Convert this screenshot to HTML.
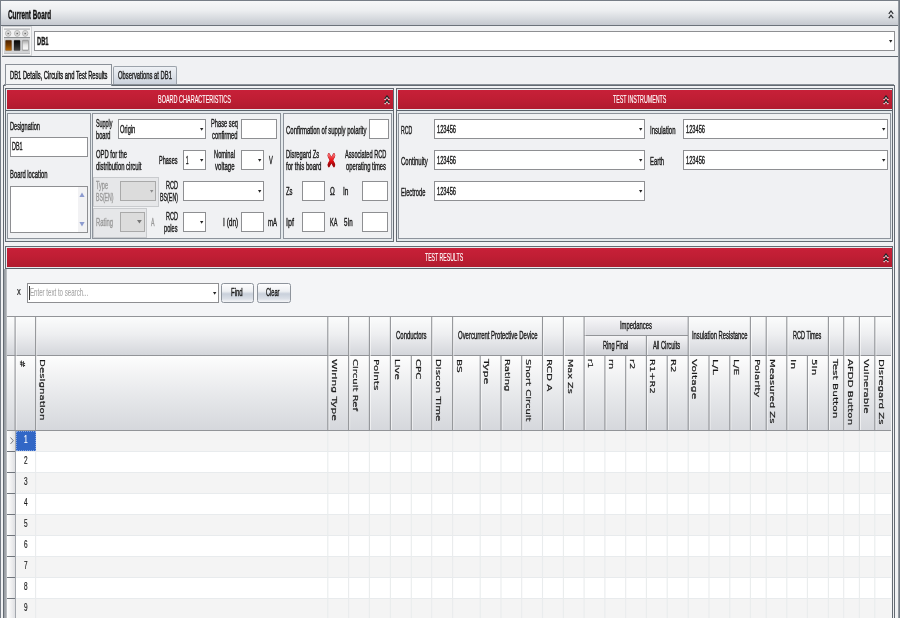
<!DOCTYPE html>
<html lang="en"><head><meta charset="utf-8"><title>Current Board</title>
<style>
html,body{margin:0;padding:0;}
body{width:900px;height:618px;overflow:hidden;position:relative;background:#f0f1f3;font-family:"Liberation Sans",sans-serif;}
div,span.t,svg.a{position:absolute;box-sizing:content-box;}
span.t{white-space:nowrap;line-height:1;transform-origin:0 0;-webkit-text-stroke:0.42px currentColor;}
svg.a{overflow:visible;}
span.v{font-family:"DejaVu Sans","Liberation Sans",sans-serif;-webkit-text-stroke:0.25px currentColor;}
</style></head><body>
<svg width="0" height="0" style="position:absolute"><filter id="hb" x="0" y="0" width="1" height="1" color-interpolation-filters="sRGB"><feGaussianBlur stdDeviation="0.42 0"/></filter></svg>
<div id="root" style="left:0;top:0;width:900px;height:618px;overflow:hidden;filter:url(#hb);">

<div style="left:0px;top:0px;width:898px;height:640px;border:1px solid #767d86;background:#f0f1f3;"></div>
<div style="left:898px;top:1px;width:1px;height:640px;background:#959ba2;"></div>
<div style="left:1px;top:1px;width:897px;height:24px;background:linear-gradient(#f6f7f8,#eceef0 40%,#c5c9d0);border-bottom:1px solid #6b727a;"></div>
<span class="t" style="left:8.00px;top:8.84px;font-size:12px;font-weight:bold;color:#111;transform:scaleX(0.5287);-webkit-text-stroke-width:0.4px;">Current Board</span>
<svg class="a" style="left:888px;top:9.7px" width="6" height="9" viewBox="0 0 6 9"><path d="M0.8 3.9L3 0.9L5.2 3.9M0.8 8.1L3 5.1L5.2 8.1" fill="none" stroke="#2a2d31" stroke-width="1.15"/></svg>
<div style="left:2px;top:26px;width:30px;height:30px;background:#cfd1d4;"></div>
<div style="left:3px;top:27px;width:26px;height:26px;border:1px solid #f6f6f6;background:#d2d3d5;"></div>
<div style="left:4px;top:29px;width:26px;height:8px;background:#f1f1f2;border-top:1px solid #c4c6c8;"></div>
<div style="left:4px;top:37px;width:26px;height:1px;background:#8f9295;"></div>
<div style="left:4px;top:53px;width:26px;height:1px;background:#bdbfc2;"></div>
<svg class="a" style="left:5.1000000000000005px;top:29.6px" width="6.4" height="6.8" viewBox="0 0 6.4 6.8"><ellipse cx="3.2" cy="3.4" rx="2.7" ry="2.9" fill="#ececec" stroke="#a4a4a4" stroke-width="0.8"/><ellipse cx="3.2" cy="3.4" rx="1.5" ry="1.6" fill="#e0e0e0" stroke="#b9b9b9" stroke-width="0.5"/><circle cx="3.2" cy="3.4" r="0.75" fill="#555"/></svg>
<svg class="a" style="left:13.7px;top:29.6px" width="6.4" height="6.8" viewBox="0 0 6.4 6.8"><ellipse cx="3.2" cy="3.4" rx="2.7" ry="2.9" fill="#ececec" stroke="#a4a4a4" stroke-width="0.8"/><ellipse cx="3.2" cy="3.4" rx="1.5" ry="1.6" fill="#e0e0e0" stroke="#b9b9b9" stroke-width="0.5"/><circle cx="3.2" cy="3.4" r="0.75" fill="#555"/></svg>
<svg class="a" style="left:22.1px;top:29.6px" width="6.4" height="6.8" viewBox="0 0 6.4 6.8"><ellipse cx="3.2" cy="3.4" rx="2.7" ry="2.9" fill="#ececec" stroke="#a4a4a4" stroke-width="0.8"/><ellipse cx="3.2" cy="3.4" rx="1.5" ry="1.6" fill="#e0e0e0" stroke="#b9b9b9" stroke-width="0.5"/><circle cx="3.2" cy="3.4" r="0.75" fill="#555"/></svg>
<svg class="a" style="left:4px;top:38px" width="26" height="15" viewBox="0 0 26 15"><defs><linearGradient id="ga" x1="0" y1="0" x2="0" y2="1"><stop offset="0" stop-color="#4a2100"/><stop offset=".5" stop-color="#7b3e00"/><stop offset="1" stop-color="#bd6a04"/></linearGradient><linearGradient id="gb" x1="0" y1="0" x2="0" y2="1"><stop offset="0" stop-color="#050505"/><stop offset=".6" stop-color="#262626"/><stop offset="1" stop-color="#4a4a4a"/></linearGradient><linearGradient id="gc" x1="0" y1="0" x2="0" y2="1"><stop offset="0" stop-color="#a4a4a4"/><stop offset=".45" stop-color="#e6e6e6"/><stop offset=".8" stop-color="#f6f6f6"/><stop offset="1" stop-color="#bcbcbc"/></linearGradient></defs><rect x="1.5" y="2.3" width="6.1" height="10.2" rx=".6" fill="url(#ga)" stroke="#5c3a14" stroke-opacity=".6" stroke-width=".5"/><rect x="10" y="2.3" width="6.1" height="10.2" rx=".6" fill="url(#gb)" stroke="#222" stroke-opacity=".6" stroke-width=".5"/><rect x="18.4" y="2.3" width="6.1" height="10.2" rx=".6" fill="url(#gc)" stroke="#8a8a8a" stroke-width=".6"/></svg>
<div style="left:34px;top:31px;width:859px;height:18px;background:#fff;border:1px solid #8e8f92;"></div>
<svg class="a" style="left:888.80px;top:39.90px" width="3.4" height="2.8" viewBox="0 0 3.4 2.8"><path d="M0 0H3.4L1.7 2.8Z" fill="#222"/></svg>
<span class="t" style="left:37.00px;top:35.87px;font-size:11.5px;font-weight:bold;color:#1a1a1a;transform:scaleX(0.4999);">DB1</span>
<div style="left:2px;top:56px;width:896px;height:1px;background:#5f666e;"></div>
<div style="left:113px;top:66px;width:62px;height:18px;border:1px solid #9ca3ab;border-bottom:none;border-radius:2px 2px 0 0;background:linear-gradient(#eef1f5,#dde2e9 50%,#c9d0db);"></div>
<span class="t" style="left:117.50px;top:70.17px;font-size:11.5px;color:#222;transform:scaleX(0.5090);">Observations at DB1</span>
<div style="left:3px;top:85px;width:890px;height:600px;border:1px solid #636a72;background:#f0f1f3;"></div>
<div style="left:5px;top:64px;width:105px;height:21px;border:1px solid #8a9098;border-bottom:none;background:#f3f4f5;"></div>
<div style="left:4px;top:84px;width:890px;height:1px;background:#8b9198;"></div>
<span class="t" style="left:9.50px;top:69.87px;font-size:11.5px;color:#111;transform:scaleX(0.5040);">DB1 Details, Circuits and Test Results</span>
<div style="left:5px;top:88px;width:387px;height:152px;border:1px solid #636a72;background:#e4e9ec;"></div>
<div style="left:7px;top:90px;width:386px;height:19px;background:linear-gradient(#c72038,#c01e34 45%,#b01b2f);"></div>
<div style="left:6px;top:110px;width:387px;height:1px;background:#59616a;"></div>
<span class="t" style="left:158.00px;top:94.37px;font-size:11.5px;color:#fff;transform:scaleX(0.4780);-webkit-text-stroke-width:0.15px;">BOARD CHARACTERISTICS</span>
<svg class="a" style="left:383.8px;top:95.2px" width="6" height="9" viewBox="0 0 6 9"><path d="M0.7 4.9L3 1.9L5.3 4.9M0.7 9.1L3 6.1L5.3 9.1" fill="none" stroke="#fff" stroke-width="1.2"/><path d="M0.7 3.9L3 0.9L5.3 3.9M0.7 8.1L3 5.1L5.3 8.1" fill="none" stroke="#1c2224" stroke-width="1.2"/></svg>
<div style="left:7px;top:113px;width:82px;height:124px;border:1px solid #8d939b;background:#f0f1f3;"></div>
<div style="left:92px;top:113px;width:187px;height:124px;border:1px solid #8d939b;background:#f0f1f3;"></div>
<div style="left:283px;top:113px;width:107px;height:124px;border:1px solid #8d939b;background:#f0f1f3;"></div>
<div style="left:396px;top:88px;width:495px;height:152px;border:1px solid #636a72;background:#e4e9ec;"></div>
<div style="left:398px;top:90px;width:494px;height:19px;background:linear-gradient(#c72038,#c01e34 45%,#b01b2f);"></div>
<div style="left:397px;top:110px;width:495px;height:1px;background:#59616a;"></div>
<span class="t" style="left:612.70px;top:94.37px;font-size:11.5px;color:#fff;transform:scaleX(0.4617);-webkit-text-stroke-width:0.15px;">TEST INSTRUMENTS</span>
<svg class="a" style="left:882.5px;top:95.2px" width="6" height="9" viewBox="0 0 6 9"><path d="M0.7 4.9L3 1.9L5.3 4.9M0.7 9.1L3 6.1L5.3 9.1" fill="none" stroke="#fff" stroke-width="1.2"/><path d="M0.7 3.9L3 0.9L5.3 3.9M0.7 8.1L3 5.1L5.3 8.1" fill="none" stroke="#1c2224" stroke-width="1.2"/></svg>
<div style="left:398px;top:113px;width:491px;height:124px;border:1px solid #8d939b;background:#f0f1f3;"></div>
<div style="left:5px;top:246px;width:886px;height:452px;border:1px solid #636a72;background:#e4e9ec;"></div>
<div style="left:7px;top:248px;width:885px;height:19px;background:linear-gradient(#c72038,#c01e34 45%,#b01b2f);"></div>
<div style="left:6px;top:268px;width:886px;height:1px;background:#59616a;"></div>
<span class="t" style="left:424.90px;top:252.37px;font-size:11.5px;color:#fff;transform:scaleX(0.4505);-webkit-text-stroke-width:0.15px;">TEST RESULTS</span>
<svg class="a" style="left:882.5px;top:253.2px" width="6" height="9" viewBox="0 0 6 9"><path d="M0.7 4.9L3 1.9L5.3 4.9M0.7 9.1L3 6.1L5.3 9.1" fill="none" stroke="#fff" stroke-width="1.2"/><path d="M0.7 3.9L3 0.9L5.3 3.9M0.7 8.1L3 5.1L5.3 8.1" fill="none" stroke="#1c2224" stroke-width="1.2"/></svg>
<div style="left:7px;top:269px;width:885px;height:400px;background:#f4f5f7;"></div>
<span class="t" style="left:10.00px;top:120.77px;font-size:11.5px;color:#1a1a1a;transform:scaleX(0.4940);">Designation</span>
<div style="left:10px;top:137px;width:76px;height:18px;background:#fff;border:1px solid #8e8f92;"></div>
<span class="t" style="left:11.70px;top:141.27px;font-size:11.5px;color:#1a1a1a;transform:scaleX(0.4738);">DB1</span>
<span class="t" style="left:10.00px;top:168.77px;font-size:11.5px;color:#1a1a1a;transform:scaleX(0.5101);">Board location</span>
<div style="left:10px;top:186px;width:76px;height:45px;background:#fff;border:1px solid #8e8f92;"></div>
<div style="left:78px;top:187px;width:9px;height:45px;background:#f2f2f4;"></div>
<svg class="a" style="left:79px;top:192px" width="6" height="6" viewBox="0 0 6 6"><path d="M3 0.5L5.6 5H0.4Z" fill="#8d9bd0"/></svg>
<svg class="a" style="left:79px;top:221px" width="6" height="6" viewBox="0 0 6 6"><path d="M3 5.5L5.6 1H0.4Z" fill="#8d9bd0"/></svg>
<span class="t" style="left:96.00px;top:117.77px;font-size:11.5px;color:#1a1a1a;transform:scaleX(0.4693);">Supply</span>
<span class="t" style="left:96.00px;top:130.27px;font-size:11.5px;color:#1a1a1a;transform:scaleX(0.4930);">board</span>
<div style="left:118px;top:119px;width:86px;height:18px;background:#fff;border:1px solid #8e8f92;"></div>
<svg class="a" style="left:199.60px;top:127.90px" width="3.4" height="2.8" viewBox="0 0 3.4 2.8"><path d="M0 0H3.4L1.7 2.8Z" fill="#222"/></svg>
<span class="t" style="left:119.70px;top:123.57px;font-size:11.5px;color:#1a1a1a;transform:scaleX(0.4988);">Origin</span>
<span class="t" style="left:211.00px;top:118.27px;font-size:11.5px;color:#1a1a1a;transform:scaleX(0.4969);">Phase seq</span>
<span class="t" style="left:212.00px;top:130.27px;font-size:11.5px;color:#1a1a1a;transform:scaleX(0.5070);">confirmed</span>
<div style="left:241px;top:119px;width:34px;height:18px;background:#fff;border:1px solid #8e8f92;"></div>
<span class="t" style="left:96.00px;top:148.77px;font-size:11.5px;color:#1a1a1a;transform:scaleX(0.5106);">OPD for the</span>
<span class="t" style="left:96.00px;top:161.27px;font-size:11.5px;color:#1a1a1a;transform:scaleX(0.5122);">distribution circuit</span>
<span class="t" style="left:159.00px;top:154.87px;font-size:11.5px;color:#1a1a1a;transform:scaleX(0.4823);">Phases</span>
<div style="left:183px;top:150px;width:21px;height:18px;background:#fff;border:1px solid #8e8f92;"></div>
<svg class="a" style="left:199.60px;top:158.90px" width="3.4" height="2.8" viewBox="0 0 3.4 2.8"><path d="M0 0H3.4L1.7 2.8Z" fill="#222"/></svg>
<span class="t" style="left:186.00px;top:154.57px;font-size:11.5px;color:#1a1a1a;transform:scaleX(0.3909);">1</span>
<span class="t" style="left:213.50px;top:148.77px;font-size:11.5px;color:#1a1a1a;transform:scaleX(0.4979);">Nominal</span>
<span class="t" style="left:214.50px;top:161.27px;font-size:11.5px;color:#1a1a1a;transform:scaleX(0.5259);">voltage</span>
<div style="left:241px;top:150px;width:21px;height:18px;background:#fff;border:1px solid #8e8f92;"></div>
<svg class="a" style="left:257.60px;top:158.90px" width="3.4" height="2.8" viewBox="0 0 3.4 2.8"><path d="M0 0H3.4L1.7 2.8Z" fill="#222"/></svg>
<span class="t" style="left:268.70px;top:154.77px;font-size:11.5px;color:#1a1a1a;transform:scaleX(0.4954);">V</span>
<div style="left:93px;top:177px;width:64px;height:28px;border:1px solid #c9cbce;background:#e6e7e9;"></div>
<span class="t" style="left:96.00px;top:179.77px;font-size:11.5px;color:#9a9a9a;transform:scaleX(0.4814);">Type</span>
<span class="t" style="left:96.00px;top:192.27px;font-size:11.5px;color:#9a9a9a;transform:scaleX(0.4490);">BS(EN)</span>
<div style="left:120px;top:181px;width:34px;height:18px;background:#dcdcdc;border:1px solid #a9a9a9;"></div>
<svg class="a" style="left:149.60px;top:189.90px" width="3.4" height="2.8" viewBox="0 0 3.4 2.8"><path d="M0 0H3.4L1.7 2.8Z" fill="#8a8a8a"/></svg>
<span class="t" style="left:165.50px;top:179.77px;font-size:11.5px;color:#1a1a1a;transform:scaleX(0.4816);">RCD</span>
<span class="t" style="left:159.50px;top:192.27px;font-size:11.5px;color:#1a1a1a;transform:scaleX(0.4618);">BS(EN)</span>
<div style="left:183px;top:181px;width:79px;height:18px;background:#fff;border:1px solid #8e8f92;"></div>
<svg class="a" style="left:257.60px;top:189.90px" width="3.4" height="2.8" viewBox="0 0 3.4 2.8"><path d="M0 0H3.4L1.7 2.8Z" fill="#222"/></svg>
<div style="left:93px;top:208px;width:52px;height:28px;border:1px solid #c9cbce;background:#e6e7e9;"></div>
<span class="t" style="left:96.00px;top:216.77px;font-size:11.5px;color:#9a9a9a;transform:scaleX(0.5114);">Rating</span>
<div style="left:120px;top:212px;width:23px;height:18px;background:#dcdcdc;border:1px solid #a9a9a9;"></div>
<svg class="a" style="left:137.20px;top:220.40px" width="4.8" height="3.6" viewBox="0 0 4.8 3.6"><path d="M0 0H4.8L2.4 3.6Z" fill="#777"/></svg>
<span class="t" style="left:150.50px;top:216.77px;font-size:11.5px;color:#9a9a9a;transform:scaleX(0.4563);">A</span>
<span class="t" style="left:165.50px;top:210.77px;font-size:11.5px;color:#1a1a1a;transform:scaleX(0.4816);">RCD</span>
<span class="t" style="left:164.00px;top:223.27px;font-size:11.5px;color:#1a1a1a;transform:scaleX(0.4911);">poles</span>
<div style="left:183px;top:212px;width:21px;height:18px;background:#fff;border:1px solid #8e8f92;"></div>
<svg class="a" style="left:199.60px;top:220.90px" width="3.4" height="2.8" viewBox="0 0 3.4 2.8"><path d="M0 0H3.4L1.7 2.8Z" fill="#222"/></svg>
<span class="t" style="left:222.70px;top:216.77px;font-size:11.5px;color:#1a1a1a;transform:scaleX(0.5701);">I (dn)</span>
<div style="left:241px;top:212px;width:21px;height:18px;background:#fff;border:1px solid #8e8f92;"></div>
<span class="t" style="left:268.00px;top:216.77px;font-size:11.5px;color:#1a1a1a;transform:scaleX(0.5217);">mA</span>
<span class="t" style="left:285.50px;top:124.67px;font-size:11.5px;color:#1a1a1a;transform:scaleX(0.5205);">Confirmation of supply polarity</span>
<div style="left:369px;top:119px;width:18px;height:18px;background:#fff;border:1px solid #8e8f92;"></div>
<span class="t" style="left:285.50px;top:148.77px;font-size:11.5px;color:#1a1a1a;transform:scaleX(0.5044);">Disregard Zs</span>
<span class="t" style="left:285.50px;top:161.27px;font-size:11.5px;color:#1a1a1a;transform:scaleX(0.5290);">for this board</span>
<svg class="a" style="left:326.8px;top:152.5px" width="8.8" height="14.4" viewBox="0 0 17 15" preserveAspectRatio="none"><defs><linearGradient id="gx" x1="0" y1="0" x2="0" y2="1"><stop offset="0" stop-color="#f4686c"/><stop offset=".35" stop-color="#f0262a"/><stop offset=".6" stop-color="#e20d12"/><stop offset="1" stop-color="#9d080c"/></linearGradient></defs><path d="M3.6 2.6L13.4 12.4M13.4 2.6L3.6 12.4" fill="none" stroke="#b3161a" stroke-width="5" stroke-linecap="round"/><path d="M3.6 2.6L13.4 12.4M13.4 2.6L3.6 12.4" fill="none" stroke="url(#gx)" stroke-width="4" stroke-linecap="round"/></svg>
<span class="t" style="left:344.80px;top:148.77px;font-size:11.5px;color:#1a1a1a;transform:scaleX(0.4907);">Associated RCD</span>
<span class="t" style="left:345.50px;top:161.27px;font-size:11.5px;color:#1a1a1a;transform:scaleX(0.5088);">operating times</span>
<span class="t" style="left:285.50px;top:185.87px;font-size:11.5px;color:#1a1a1a;transform:scaleX(0.5088);">Zs</span>
<div style="left:302px;top:181px;width:21px;height:18px;background:#fff;border:1px solid #8e8f92;"></div>
<span class="t" style="left:330.00px;top:185.87px;font-size:11.5px;color:#1a1a1a;transform:scaleX(0.5584);">Ω</span>
<span class="t" style="left:343.20px;top:185.87px;font-size:11.5px;color:#1a1a1a;transform:scaleX(0.5631);">In</span>
<div style="left:362px;top:181px;width:24px;height:18px;background:#fff;border:1px solid #8e8f92;"></div>
<span class="t" style="left:285.50px;top:216.77px;font-size:11.5px;color:#1a1a1a;transform:scaleX(0.6179);">Ipf</span>
<div style="left:302px;top:212px;width:21px;height:18px;background:#fff;border:1px solid #8e8f92;"></div>
<span class="t" style="left:329.60px;top:216.77px;font-size:11.5px;color:#1a1a1a;transform:scaleX(0.4823);">KA</span>
<span class="t" style="left:343.70px;top:216.77px;font-size:11.5px;color:#1a1a1a;transform:scaleX(0.5380);">5In</span>
<div style="left:362px;top:212px;width:24px;height:18px;background:#fff;border:1px solid #8e8f92;"></div>
<span class="t" style="left:400.70px;top:124.67px;font-size:11.5px;color:#1a1a1a;transform:scaleX(0.4535);">RCD</span>
<div style="left:434px;top:119px;width:209px;height:18px;background:#fff;border:1px solid #8e8f92;"></div>
<svg class="a" style="left:639.10px;top:127.90px" width="3.4" height="2.8" viewBox="0 0 3.4 2.8"><path d="M0 0H3.4L1.7 2.8Z" fill="#222"/></svg>
<span class="t" style="left:436.50px;top:123.57px;font-size:11.5px;color:#1a1a1a;transform:scaleX(0.4952);">123456</span>
<span class="t" style="left:400.70px;top:155.67px;font-size:11.5px;color:#1a1a1a;transform:scaleX(0.5221);">Continuity</span>
<div style="left:434px;top:150px;width:209px;height:18px;background:#fff;border:1px solid #8e8f92;"></div>
<svg class="a" style="left:639.10px;top:158.90px" width="3.4" height="2.8" viewBox="0 0 3.4 2.8"><path d="M0 0H3.4L1.7 2.8Z" fill="#222"/></svg>
<span class="t" style="left:436.50px;top:154.57px;font-size:11.5px;color:#1a1a1a;transform:scaleX(0.4952);">123456</span>
<span class="t" style="left:400.70px;top:186.67px;font-size:11.5px;color:#1a1a1a;transform:scaleX(0.5023);">Electrode</span>
<div style="left:434px;top:181px;width:209px;height:18px;background:#fff;border:1px solid #8e8f92;"></div>
<svg class="a" style="left:639.10px;top:189.90px" width="3.4" height="2.8" viewBox="0 0 3.4 2.8"><path d="M0 0H3.4L1.7 2.8Z" fill="#222"/></svg>
<span class="t" style="left:436.50px;top:185.57px;font-size:11.5px;color:#1a1a1a;transform:scaleX(0.4952);">123456</span>
<span class="t" style="left:650.00px;top:124.67px;font-size:11.5px;color:#1a1a1a;transform:scaleX(0.5180);">Insulation</span>
<div style="left:683px;top:119px;width:203px;height:18px;background:#fff;border:1px solid #8e8f92;"></div>
<svg class="a" style="left:882.30px;top:127.90px" width="3.4" height="2.8" viewBox="0 0 3.4 2.8"><path d="M0 0H3.4L1.7 2.8Z" fill="#222"/></svg>
<span class="t" style="left:685.50px;top:123.57px;font-size:11.5px;color:#1a1a1a;transform:scaleX(0.4952);">123456</span>
<span class="t" style="left:650.00px;top:155.67px;font-size:11.5px;color:#1a1a1a;transform:scaleX(0.5130);">Earth</span>
<div style="left:683px;top:150px;width:203px;height:18px;background:#fff;border:1px solid #8e8f92;"></div>
<svg class="a" style="left:882.30px;top:158.90px" width="3.4" height="2.8" viewBox="0 0 3.4 2.8"><path d="M0 0H3.4L1.7 2.8Z" fill="#222"/></svg>
<span class="t" style="left:685.50px;top:154.57px;font-size:11.5px;color:#1a1a1a;transform:scaleX(0.4952);">123456</span>
<span class="t" style="left:17.20px;top:286.47px;font-size:11.5px;color:#222;transform:scaleX(0.6609);-webkit-text-stroke-width:0.2px;">x</span>
<div style="left:27px;top:283px;width:190px;height:18px;background:#fff;border:1px solid #8e8f92;"></div>
<svg class="a" style="left:212.80px;top:291.90px" width="3.4" height="2.8" viewBox="0 0 3.4 2.8"><path d="M0 0H3.4L1.7 2.8Z" fill="#222"/></svg>
<div style="left:29px;top:286px;width:1px;height:14px;background:#333;"></div>
<span class="t" style="left:29.80px;top:287.27px;font-size:11.5px;color:#a4a4a4;transform:scaleX(0.5325);-webkit-text-stroke-width:0.1px;">Enter text to search...</span>
<div style="left:221px;top:283px;width:31px;height:18px;border:1px solid #8e949c;border-radius:2.5px;background:linear-gradient(#fdfdfe,#eef0f3 40%,#c9d0db 55%,#d9dee6 80%,#f4f5f7);"></div>
<span class="t" style="left:230.80px;top:287.37px;font-size:11.5px;color:#1a1a1a;transform:scaleX(0.5230);">Find</span>
<div style="left:257px;top:283px;width:32px;height:18px;border:1px solid #8e949c;border-radius:2.5px;background:linear-gradient(#fdfdfe,#eef0f3 40%,#c9d0db 55%,#d9dee6 80%,#f4f5f7);"></div>
<span class="t" style="left:265.50px;top:287.37px;font-size:11.5px;color:#1a1a1a;transform:scaleX(0.4913);">Clear</span>
<div style="left:7px;top:316px;width:884px;height:1px;background:#929498;"></div>
<div style="left:7px;top:317px;width:884px;height:38px;background:linear-gradient(#fbfcfc,#eeeff1 45%,#d4d6db);"></div>
<div style="left:7px;top:355px;width:884px;height:1px;background:#929498;"></div>
<div style="left:7px;top:356px;width:884px;height:74px;background:linear-gradient(#fdfdfd,#ecedef 40%,#d5d7dc);"></div>
<div style="left:7px;top:430px;width:884px;height:1px;background:#929498;"></div>
<div style="left:584px;top:335px;width:104px;height:1px;background:#929498;"></div>
<div style="left:585px;top:317px;width:103px;height:18px;background:linear-gradient(#f7f7f9,#dcdde2);"></div>
<div style="left:585px;top:336px;width:61px;height:19px;background:linear-gradient(#f4f4f6,#cfd1d6);"></div>
<div style="left:648px;top:336px;width:40px;height:19px;background:linear-gradient(#f4f4f6,#cfd1d6);"></div>
<span class="t" style="left:395.70px;top:329.87px;font-size:11.5px;color:#1a1a1a;transform:scaleX(0.5187);">Conductors</span>
<span class="t" style="left:457.80px;top:329.87px;font-size:11.5px;color:#1a1a1a;transform:scaleX(0.5183);">Overcurrent Protective Device</span>
<span class="t" style="left:620.40px;top:319.57px;font-size:11.5px;color:#1a1a1a;transform:scaleX(0.5076);">Impedances</span>
<span class="t" style="left:602.70px;top:339.57px;font-size:11.5px;color:#1a1a1a;transform:scaleX(0.4887);">Ring Final</span>
<span class="t" style="left:653.30px;top:339.57px;font-size:11.5px;color:#1a1a1a;transform:scaleX(0.4990);">All Circuits</span>
<span class="t" style="left:691.60px;top:330.07px;font-size:11.5px;color:#1a1a1a;transform:scaleX(0.5078);">Insulation Resistance</span>
<span class="t" style="left:793.10px;top:329.87px;font-size:11.5px;color:#1a1a1a;transform:scaleX(0.4832);">RCD Times</span>
<span class="t v" style="left:26.04px;top:359.90px;font-size:10px;color:#1a1a1a;transform:rotate(90deg) scale(0.9070,0.75);">#</span>
<span class="t v" style="left:45.95px;top:359.30px;font-size:10px;color:#1a1a1a;transform:rotate(90deg) scale(1.0266,0.75);">Designation</span>
<span class="t v" style="left:338.45px;top:359.30px;font-size:10px;color:#1a1a1a;transform:rotate(90deg) scale(1.0641,0.75);">Wiring Type</span>
<span class="t v" style="left:359.45px;top:359.30px;font-size:10px;color:#1a1a1a;transform:rotate(90deg) scale(1.0090,0.75);">Circuit Ref</span>
<span class="t v" style="left:379.95px;top:359.30px;font-size:10px;color:#1a1a1a;transform:rotate(90deg) scale(1.0454,0.75);">Points</span>
<span class="t v" style="left:400.95px;top:359.30px;font-size:10px;color:#1a1a1a;transform:rotate(90deg) scale(1.0185,0.75);">Live</span>
<span class="t v" style="left:421.95px;top:359.30px;font-size:10px;color:#1a1a1a;transform:rotate(90deg) scale(1.0202,0.75);">CPC</span>
<span class="t v" style="left:442.45px;top:359.30px;font-size:10px;color:#1a1a1a;transform:rotate(90deg) scale(1.0164,0.75);">Discon Time</span>
<span class="t v" style="left:462.95px;top:359.30px;font-size:10px;color:#1a1a1a;transform:rotate(90deg) scale(1.0587,0.75);">BS</span>
<span class="t v" style="left:490.45px;top:359.30px;font-size:10px;color:#1a1a1a;transform:rotate(90deg) scale(1.1058,0.75);">Type</span>
<span class="t v" style="left:511.45px;top:359.30px;font-size:10px;color:#1a1a1a;transform:rotate(90deg) scale(1.0080,0.75);">Rating</span>
<span class="t v" style="left:531.95px;top:359.30px;font-size:10px;color:#1a1a1a;transform:rotate(90deg) scale(1.0048,0.75);">Short Circuit</span>
<span class="t v" style="left:552.95px;top:359.30px;font-size:10px;color:#1a1a1a;transform:rotate(90deg) scale(1.0433,0.75);">RCD A</span>
<span class="t v" style="left:573.95px;top:359.30px;font-size:10px;color:#1a1a1a;transform:rotate(90deg) scale(0.9662,0.75);">Max Zs</span>
<span class="t v" style="left:594.45px;top:359.30px;font-size:10px;color:#1a1a1a;transform:rotate(90deg) scale(0.8784,0.75);">r1</span>
<span class="t v" style="left:615.45px;top:359.30px;font-size:10px;color:#1a1a1a;transform:rotate(90deg) scale(1.0026,0.75);">rn</span>
<span class="t v" style="left:635.95px;top:359.30px;font-size:10px;color:#1a1a1a;transform:rotate(90deg) scale(0.9834,0.75);">r2</span>
<span class="t v" style="left:656.45px;top:359.30px;font-size:10px;color:#1a1a1a;transform:rotate(90deg) scale(0.9914,0.75);">R1+R2</span>
<span class="t v" style="left:677.45px;top:359.30px;font-size:10px;color:#1a1a1a;transform:rotate(90deg) scale(1.0217,0.75);">R2</span>
<span class="t v" style="left:698.45px;top:359.30px;font-size:10px;color:#1a1a1a;transform:rotate(90deg) scale(1.0744,0.75);">Voltage</span>
<span class="t v" style="left:719.45px;top:359.30px;font-size:10px;color:#1a1a1a;transform:rotate(90deg) scale(1.0887,0.75);">L/L</span>
<span class="t v" style="left:740.45px;top:359.30px;font-size:10px;color:#1a1a1a;transform:rotate(90deg) scale(1.0682,0.75);">L/E</span>
<span class="t v" style="left:760.95px;top:359.30px;font-size:10px;color:#1a1a1a;transform:rotate(90deg) scale(1.0260,0.75);">Polarity</span>
<span class="t v" style="left:776.45px;top:359.30px;font-size:10px;color:#1a1a1a;transform:rotate(90deg) scale(1.0049,0.75);">Measured Zs</span>
<span class="t v" style="left:797.45px;top:359.30px;font-size:10px;color:#1a1a1a;transform:rotate(90deg) scale(1.1090,0.75);">In</span>
<span class="t v" style="left:817.95px;top:359.30px;font-size:10px;color:#1a1a1a;transform:rotate(90deg) scale(1.0351,0.75);">5In</span>
<span class="t v" style="left:838.95px;top:359.30px;font-size:10px;color:#1a1a1a;transform:rotate(90deg) scale(1.0521,0.75);">Test Button</span>
<span class="t v" style="left:853.95px;top:359.30px;font-size:10px;color:#1a1a1a;transform:rotate(90deg) scale(1.0222,0.75);">AFDD Button</span>
<span class="t v" style="left:869.95px;top:359.30px;font-size:10px;color:#1a1a1a;transform:rotate(90deg) scale(1.0228,0.75);">Vulnerable</span>
<span class="t v" style="left:885.45px;top:359.30px;font-size:10px;color:#1a1a1a;transform:rotate(90deg) scale(1.0293,0.75);">Disregard Zs</span>
<div style="left:15px;top:431px;width:876px;height:21px;background:#f4f4f4;"></div>
<div style="left:15px;top:451px;width:876px;height:1px;background:#e8ebed;"></div>
<div style="left:7px;top:431px;width:8px;height:20px;background:linear-gradient(90deg,#fefefe,#f1f1f2 50%,#dfe0e3);"></div>
<div style="left:7px;top:451px;width:8px;height:1px;background:#70757c;"></div>
<div style="left:15px;top:452px;width:876px;height:21px;background:#ffffff;"></div>
<div style="left:15px;top:472px;width:876px;height:1px;background:#e8ebed;"></div>
<div style="left:7px;top:452px;width:8px;height:20px;background:linear-gradient(90deg,#fefefe,#f1f1f2 50%,#dfe0e3);"></div>
<div style="left:7px;top:472px;width:8px;height:1px;background:#70757c;"></div>
<div style="left:15px;top:473px;width:876px;height:21px;background:#f4f4f4;"></div>
<div style="left:15px;top:493px;width:876px;height:1px;background:#e8ebed;"></div>
<div style="left:7px;top:473px;width:8px;height:20px;background:linear-gradient(90deg,#fefefe,#f1f1f2 50%,#dfe0e3);"></div>
<div style="left:7px;top:493px;width:8px;height:1px;background:#70757c;"></div>
<div style="left:15px;top:494px;width:876px;height:21px;background:#ffffff;"></div>
<div style="left:15px;top:514px;width:876px;height:1px;background:#e8ebed;"></div>
<div style="left:7px;top:494px;width:8px;height:20px;background:linear-gradient(90deg,#fefefe,#f1f1f2 50%,#dfe0e3);"></div>
<div style="left:7px;top:514px;width:8px;height:1px;background:#70757c;"></div>
<div style="left:15px;top:515px;width:876px;height:21px;background:#f4f4f4;"></div>
<div style="left:15px;top:535px;width:876px;height:1px;background:#e8ebed;"></div>
<div style="left:7px;top:515px;width:8px;height:20px;background:linear-gradient(90deg,#fefefe,#f1f1f2 50%,#dfe0e3);"></div>
<div style="left:7px;top:535px;width:8px;height:1px;background:#70757c;"></div>
<div style="left:15px;top:536px;width:876px;height:21px;background:#ffffff;"></div>
<div style="left:15px;top:556px;width:876px;height:1px;background:#e8ebed;"></div>
<div style="left:7px;top:536px;width:8px;height:20px;background:linear-gradient(90deg,#fefefe,#f1f1f2 50%,#dfe0e3);"></div>
<div style="left:7px;top:556px;width:8px;height:1px;background:#70757c;"></div>
<div style="left:15px;top:557px;width:876px;height:21px;background:#f4f4f4;"></div>
<div style="left:15px;top:577px;width:876px;height:1px;background:#e8ebed;"></div>
<div style="left:7px;top:557px;width:8px;height:20px;background:linear-gradient(90deg,#fefefe,#f1f1f2 50%,#dfe0e3);"></div>
<div style="left:7px;top:577px;width:8px;height:1px;background:#70757c;"></div>
<div style="left:15px;top:578px;width:876px;height:21px;background:#ffffff;"></div>
<div style="left:15px;top:598px;width:876px;height:1px;background:#e8ebed;"></div>
<div style="left:7px;top:578px;width:8px;height:20px;background:linear-gradient(90deg,#fefefe,#f1f1f2 50%,#dfe0e3);"></div>
<div style="left:7px;top:598px;width:8px;height:1px;background:#70757c;"></div>
<div style="left:15px;top:599px;width:876px;height:21px;background:#f4f4f4;"></div>
<div style="left:15px;top:619px;width:876px;height:1px;background:#e8ebed;"></div>
<div style="left:7px;top:599px;width:8px;height:20px;background:linear-gradient(90deg,#fefefe,#f1f1f2 50%,#dfe0e3);"></div>
<div style="left:7px;top:619px;width:8px;height:1px;background:#70757c;"></div>
<svg class="a" style="left:0;top:0" width="900" height="640" viewBox="0 0 900 640" fill="none" stroke-width="1.1"><path d="M16.1 317V430" stroke="#fff" stroke-opacity=".6"/><path d="M15.1 317V430" stroke="#929498"/><path d="M36.6 317V430" stroke="#fff" stroke-opacity=".6"/><path d="M35.6 317V430" stroke="#929498"/><path d="M35.6 431V640" stroke="#e9eced"/><path d="M328.8 317V430" stroke="#fff" stroke-opacity=".6"/><path d="M327.8 317V430" stroke="#929498"/><path d="M327.8 431V640" stroke="#e9eced"/><path d="M349.6 317V430" stroke="#fff" stroke-opacity=".6"/><path d="M348.6 317V430" stroke="#929498"/><path d="M348.6 431V640" stroke="#e9eced"/><path d="M370.4 317V430" stroke="#fff" stroke-opacity=".6"/><path d="M369.4 317V430" stroke="#929498"/><path d="M369.4 431V640" stroke="#e9eced"/><path d="M391.4 317V430" stroke="#fff" stroke-opacity=".6"/><path d="M390.4 317V430" stroke="#929498"/><path d="M390.4 431V640" stroke="#e9eced"/><path d="M412.3 356V430" stroke="#fff" stroke-opacity=".6"/><path d="M411.3 356V430" stroke="#929498"/><path d="M411.3 431V640" stroke="#e9eced"/><path d="M432.7 317V430" stroke="#fff" stroke-opacity=".6"/><path d="M431.7 317V430" stroke="#929498"/><path d="M431.7 431V640" stroke="#e9eced"/><path d="M453.6 317V430" stroke="#fff" stroke-opacity=".6"/><path d="M452.6 317V430" stroke="#929498"/><path d="M452.6 431V640" stroke="#e9eced"/><path d="M481.2 356V430" stroke="#fff" stroke-opacity=".6"/><path d="M480.2 356V430" stroke="#929498"/><path d="M480.2 431V640" stroke="#e9eced"/><path d="M502.0 356V430" stroke="#fff" stroke-opacity=".6"/><path d="M501.0 356V430" stroke="#929498"/><path d="M501.0 431V640" stroke="#e9eced"/><path d="M522.7 356V430" stroke="#fff" stroke-opacity=".6"/><path d="M521.7 356V430" stroke="#929498"/><path d="M521.7 431V640" stroke="#e9eced"/><path d="M543.5 317V430" stroke="#fff" stroke-opacity=".6"/><path d="M542.5 317V430" stroke="#929498"/><path d="M542.5 431V640" stroke="#e9eced"/><path d="M564.4 317V430" stroke="#fff" stroke-opacity=".6"/><path d="M563.4 317V430" stroke="#929498"/><path d="M563.4 431V640" stroke="#e9eced"/><path d="M585.1 317V430" stroke="#fff" stroke-opacity=".6"/><path d="M584.1 317V430" stroke="#929498"/><path d="M584.1 431V640" stroke="#e9eced"/><path d="M605.9 356V430" stroke="#fff" stroke-opacity=".6"/><path d="M604.9 356V430" stroke="#929498"/><path d="M604.9 431V640" stroke="#e9eced"/><path d="M626.7 356V430" stroke="#fff" stroke-opacity=".6"/><path d="M625.7 356V430" stroke="#929498"/><path d="M625.7 431V640" stroke="#e9eced"/><path d="M647.4 356V430" stroke="#fff" stroke-opacity=".6"/><path d="M646.4 356V430" stroke="#929498"/><path d="M646.4 431V640" stroke="#e9eced"/><path d="M668.2 356V430" stroke="#fff" stroke-opacity=".6"/><path d="M667.2 356V430" stroke="#929498"/><path d="M667.2 431V640" stroke="#e9eced"/><path d="M689.2 317V430" stroke="#fff" stroke-opacity=".6"/><path d="M688.2 317V430" stroke="#929498"/><path d="M688.2 431V640" stroke="#e9eced"/><path d="M710.0 356V430" stroke="#fff" stroke-opacity=".6"/><path d="M709.0 356V430" stroke="#929498"/><path d="M709.0 431V640" stroke="#e9eced"/><path d="M730.8 356V430" stroke="#fff" stroke-opacity=".6"/><path d="M729.8 356V430" stroke="#929498"/><path d="M729.8 431V640" stroke="#e9eced"/><path d="M751.4 317V430" stroke="#fff" stroke-opacity=".6"/><path d="M750.4 317V430" stroke="#929498"/><path d="M750.4 431V640" stroke="#e9eced"/><path d="M767.2 317V430" stroke="#fff" stroke-opacity=".6"/><path d="M766.2 317V430" stroke="#929498"/><path d="M766.2 431V640" stroke="#e9eced"/><path d="M787.8 317V430" stroke="#fff" stroke-opacity=".6"/><path d="M786.8 317V430" stroke="#929498"/><path d="M786.8 431V640" stroke="#e9eced"/><path d="M808.4 356V430" stroke="#fff" stroke-opacity=".6"/><path d="M807.4 356V430" stroke="#929498"/><path d="M807.4 431V640" stroke="#e9eced"/><path d="M829.4 317V430" stroke="#fff" stroke-opacity=".6"/><path d="M828.4 317V430" stroke="#929498"/><path d="M828.4 431V640" stroke="#e9eced"/><path d="M844.7 317V430" stroke="#fff" stroke-opacity=".6"/><path d="M843.7 317V430" stroke="#929498"/><path d="M843.7 431V640" stroke="#e9eced"/><path d="M860.4 317V430" stroke="#fff" stroke-opacity=".6"/><path d="M859.4 317V430" stroke="#929498"/><path d="M859.4 431V640" stroke="#e9eced"/><path d="M875.8 317V430" stroke="#fff" stroke-opacity=".6"/><path d="M874.8 317V430" stroke="#929498"/><path d="M874.8 431V640" stroke="#e9eced"/><path d="M647.4 336V355" stroke="#fff" stroke-opacity=".6"/><path d="M646.4 336V355" stroke="#929498"/></svg>
<div style="left:15px;top:431px;width:1px;height:200px;background:#a3a7ad;"></div>
<div style="left:4px;top:269px;width:1px;height:380px;background:#9a9fa5;"></div>
<div style="left:5px;top:269px;width:1px;height:380px;background:#a2a6ab;"></div>
<div style="left:6px;top:269px;width:1px;height:380px;background:#bbbec2;"></div>
<div style="left:16px;top:431px;width:20px;height:20px;background:#3267c6;"></div>
<div style="left:16px;top:431px;width:18px;height:18px;border:1px dotted rgba(215,228,255,.5);background:none;"></div>
<span class="t" style="left:24.30px;top:434.07px;font-size:11.5px;color:#fff;transform:scaleX(0.5629);-webkit-text-stroke-width:0.2px;">1</span>
<span class="t" style="left:24.30px;top:455.07px;font-size:11.5px;color:#1a1a1a;transform:scaleX(0.5629);-webkit-text-stroke-width:0.2px;">2</span>
<span class="t" style="left:24.30px;top:476.07px;font-size:11.5px;color:#1a1a1a;transform:scaleX(0.5629);-webkit-text-stroke-width:0.2px;">3</span>
<span class="t" style="left:24.30px;top:497.07px;font-size:11.5px;color:#1a1a1a;transform:scaleX(0.5629);-webkit-text-stroke-width:0.2px;">4</span>
<span class="t" style="left:24.30px;top:518.07px;font-size:11.5px;color:#1a1a1a;transform:scaleX(0.5629);-webkit-text-stroke-width:0.2px;">5</span>
<span class="t" style="left:24.30px;top:539.07px;font-size:11.5px;color:#1a1a1a;transform:scaleX(0.5629);-webkit-text-stroke-width:0.2px;">6</span>
<span class="t" style="left:24.30px;top:560.07px;font-size:11.5px;color:#1a1a1a;transform:scaleX(0.5629);-webkit-text-stroke-width:0.2px;">7</span>
<span class="t" style="left:24.30px;top:581.07px;font-size:11.5px;color:#1a1a1a;transform:scaleX(0.5629);-webkit-text-stroke-width:0.2px;">8</span>
<span class="t" style="left:24.30px;top:602.07px;font-size:11.5px;color:#1a1a1a;transform:scaleX(0.5629);-webkit-text-stroke-width:0.2px;">9</span>
<svg class="a" style="left:9.6px;top:436.8px" width="4" height="7.4" viewBox="0 0 4 8" preserveAspectRatio="none"><path d="M0.5 0.5L3.3 4L0.5 7.5" fill="none" stroke="#6e737a" stroke-width="1"/></svg>
</div>
</body></html>
